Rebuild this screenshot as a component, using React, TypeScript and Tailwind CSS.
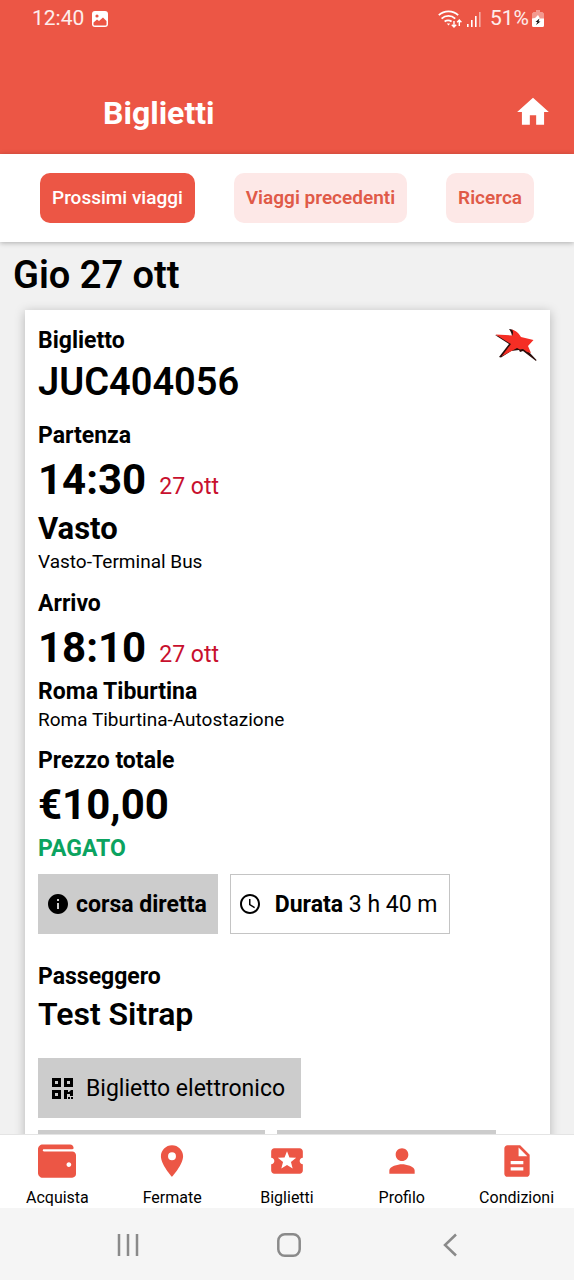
import type { ReactNode } from "react";
import { FaWallet } from "react-icons/fa";
import {
  MdAccessTime,
  MdDescription,
  MdHome,
  MdInfo,
  MdLocalActivity,
  MdPerson,
  MdPlace,
} from "react-icons/md";

function StatusBar() {
  return (
    <div className="flex h-9 items-center justify-between pl-8 pr-[30px] pt-px text-[21px] text-white/90">
      <div className="flex items-center gap-2">
        <span>12:40</span>
        <svg viewBox="0 0 16 16" className="size-4" aria-hidden="true">
          <rect width="16" height="16" rx="3" fill="#fff" />
          <circle cx="5" cy="5" r="1.6" fill="#ec5645" />
          <path d="M1.5 11.5 5 8.5l2 1.5 4-3.5 3.5 3.5v3.5a1 1 0 0 1-1 1h-11a1 1 0 0 1-1-1z" fill="#ec5645" />
        </svg>
      </div>
      <div className="flex items-center">
        <svg viewBox="0 0 24 20" className="mr-1 h-5 w-6" fill="none" stroke="#fff" strokeWidth="1.8" aria-hidden="true">
          <path d="M.8 6.2a14 14 0 0 1 19.4 0M3.6 9.6a10 10 0 0 1 13.6 0M6.6 12.6a6 6 0 0 1 7 0" />
          <path d="m8.8 14.6 1.7 2 1.7-2z" fill="#fff" stroke="none" />
          <path d="M16 12v6M13.8 15.8 16 18l2.2-2.2M21.3 17v-6M19.2 13.2l2.1-2.2 2.1 2.2" strokeWidth="1.4" />
        </svg>
        <svg viewBox="0 0 16 18" className="mr-2 h-[18px] w-4" fill="#fff" aria-hidden="true">
          <path d="M1 14h1.6v3H1zM5 10h1.6v7H5zM9 6h1.6v11H9z" />
          <path d="M13 2h1.6v15H13z" opacity=".5" />
        </svg>
        <span>51%</span>
        <svg viewBox="0 0 12 17" className="ml-[3px] h-[17px] w-3" aria-hidden="true">
          <path d="M4 0h4v2h2.500L12 3.500V9H0V3.500L1.500 2H4z" fill="#fff" opacity=".4" />
          <path d="M0 8.500 3 8 6 5l2 3.500h4v7a1.500 1.500 0 0 1-1.500 1.500h-9A1.500 1.500 0 0 1 0 15.500z" fill="#fff" />
          <path d="M7.500 8.500 3.500 12h2L4 15l4.500-3.500H6.500z" fill="#111" />
        </svg>
      </div>
    </div>
  );
}

function Header() {
  return (
    <header className="shrink-0 bg-[#ec5645]">
      <StatusBar />
      <div className="flex h-[118px] items-center justify-between pl-[103px] pr-[22px] pt-9 text-white">
        <h1 className="text-[32px] font-bold">Biglietti</h1>
        <button type="button" aria-label="Home" className="pb-0.5">
          <MdHome className="size-[38px]" />
        </button>
      </div>
    </header>
  );
}

function Tabs() {
  const base = "h-[50px] rounded-[10px] px-3 text-[19px]";
  return (
    <div className="z-10 flex h-[88px] shrink-0 items-center justify-between bg-white px-10 shadow-[0_1px_5px_rgba(0,0,0,0.28)]">
      <button type="button" className={`${base} bg-[#ec5645] font-medium text-white`}>Prossimi viaggi</button>
      <button type="button" className={`${base} bg-[#fde8e7] font-semibold text-[#e05a48]`}>Viaggi precedenti</button>
      <button type="button" className={`${base} bg-[#fde8e7] font-semibold text-[#e05a48]`}>Ricerca</button>
    </div>
  );
}

function StarLogo() {
  return (
    <svg viewBox="0 0 42 32" className="h-8 w-[42px]" role="img" aria-label="Sitrap">
      <path d="M14 0c3 0 4 1 6 3l-3 5c0-3-1-5-3-8zM0 6l14 9L4 28l2 .5L16 22l8-1 1 2 3-1 13 10 .5-1L34 23 15 9z" fill="#2a0d0b" />
      <path d="M.5 5.500 17.500 6.500C18.500 3 18 1 16 .5c5 .5 8 4 10 7.500l12.500 3-5.500 6 3 7-4-1-4-3-3 .5-3-1.500L6.500 27.500 16 15z" fill="#f52e25" />
    </svg>
  );
}

function Label({ children }: { children: ReactNode }) {
  return <h3 className="text-[23px] font-bold leading-7">{children}</h3>;
}

function Time({ time, day }: { time: string; day: string }) {
  return (
    <p className="flex items-baseline gap-[13px]">
      <span className="text-[42px] font-bold leading-[60px]">{time}</span>
      <span className="text-[23px] text-[#c8102e]">{day}</span>
    </p>
  );
}

function Ticket() {
  return (
    <article className="ml-[25px] mr-6 bg-white px-[13px] pt-[17px] shadow-[0_2px_10px_rgba(0,0,0,0.25)]">
      <div className="flex items-start justify-between">
        <Label>Biglietto</Label>
        <div className="-mb-2 pt-0.5">
          <StarLogo />
        </div>
      </div>
      <p className="text-[38px] font-semibold leading-[54px]">JUC404056</p>

      <section className="pt-[13px]">
        <Label>Partenza</Label>
        <Time time="14:30" day="27 ott" />
        <p className="text-[31px] font-bold leading-[38px]">Vasto</p>
        <p className="text-[19px] leading-7">Vasto-Terminal Bus</p>
      </section>

      <section className="pt-[14px]">
        <Label>Arrivo</Label>
        <Time time="18:10" day="27 ott" />
        <p className="text-[23px] font-bold leading-7">Roma Tiburtina</p>
        <p className="text-[19px] leading-7">Roma Tiburtina-Autostazione</p>
      </section>

      <section className="pt-[13px]">
        <Label>Prezzo totale</Label>
        <p className="text-[42px] font-bold leading-[60px]">€10,00</p>
        <p className="text-[23px] font-bold leading-7 text-[#0ba360]">PAGATO</p>
      </section>

      <div className="flex gap-3 pt-[11px] text-[23px]">
        <button type="button" className="flex h-[60px] items-center gap-[6px] bg-[#ccc] pl-2 pr-[11px] font-bold">
          <MdInfo className="size-6" />
          <span className="pt-0.5">corsa diretta</span>
        </button>
        <p className="flex h-[60px] items-center border border-[#c4c4c4] pl-[7px] pr-[11px]">
          <MdAccessTime className="mr-[13px] size-6" />
          <span className="pt-0.5">
            <strong className="font-bold">Durata</strong> 3 h 40 m
          </span>
        </p>
      </div>

      <section className="pt-[29px]">
        <Label>Passeggero</Label>
        <p className="text-[32px] font-semibold leading-[46px]">Test Sitrap</p>
      </section>

      <div className="flex flex-wrap gap-3 pt-[21px]">
        <button type="button" className="flex h-[60px] items-center gap-3 bg-[#ccc] pl-[14px] pr-4 text-[23px]">
          <svg viewBox="0 0 22 21" className="h-[21px] w-[22px]" aria-hidden="true">
            <path fillRule="evenodd" d="M0 0h9v9H0zM3 3v3h3V3zM12 0h9v9h-9zM15 3v3h3V3zM0 12h9v9H0zM3 15v3h3v-3zM12 12h4v2h1l2-2h2v6h-3v-2h-3v5h-3zM16 19h2v2h-2zM19 19h2v2h-2z" />
          </svg>
          <span className="pt-0.5">Biglietto elettronico</span>
        </button>
        <div className="flex w-full gap-3">
          <button type="button" aria-label="Modifica" className="h-[60px] w-[227px] bg-[#ccc]" />
          <button type="button" aria-label="Condividi" className="h-[60px] w-[219px] bg-[#ccc]" />
        </div>
      </div>
    </article>
  );
}

const navItems = [
  { label: "Acquista", icon: FaWallet },
  { label: "Fermate", icon: MdPlace },
  { label: "Biglietti", icon: MdLocalActivity },
  { label: "Profilo", icon: MdPerson },
  { label: "Condizioni", icon: MdDescription },
];

function BottomNav() {
  return (
    <nav className="z-10 grid h-[74px] shrink-0 grid-cols-5 border-t border-[#e4e4e4] bg-white">
      {navItems.map(({ label, icon: Icon }) => (
        <a key={label} href={`#${label.toLowerCase()}`} className="flex flex-col items-center gap-1 pt-[7px]">
          <Icon className="size-[38px] text-[#ec5645]" />
          <span className="text-[16px] leading-7">{label}</span>
        </a>
      ))}
    </nav>
  );
}

function SystemNav() {
  return (
    <div className="grid h-[72px] shrink-0 grid-cols-3 place-items-center bg-[#f5f5f5] pl-12 pr-11 pt-0.5 text-[#8a8a8a]">
      <button type="button" aria-label="Recenti">
        <svg viewBox="0 0 24 24" className="size-6" fill="none" stroke="currentColor" strokeWidth="2.5">
          <path d="M3 1v22M12 1v22M21 1v22" />
        </svg>
      </button>
      <button type="button" aria-label="Schermata iniziale">
        <svg viewBox="0 0 24 24" className="size-6" fill="none" stroke="currentColor" strokeWidth="2.5">
          <rect x="1.3" y="1.3" width="21.4" height="21.4" rx="6.5" />
        </svg>
      </button>
      <button type="button" aria-label="Indietro">
        <svg viewBox="0 0 24 24" className="size-6" fill="none" stroke="currentColor" strokeWidth="2.5">
          <path d="M18 1.500 7 12l11 10.500" />
        </svg>
      </button>
    </div>
  );
}

export default function App() {
  return (
    <div className="flex h-screen flex-col overflow-hidden bg-[#f1f1f1] font-[Roboto,sans-serif] text-black">
      <Header />
      <Tabs />
      <main className="min-h-0 flex-1 overflow-hidden">
        <h2 className="px-[13px] pb-[11px] pt-[9px] text-[38px] font-semibold leading-[48px]">Gio 27 ott</h2>
        <Ticket />
      </main>
      <BottomNav />
      <SystemNav />
    </div>
  );
}
